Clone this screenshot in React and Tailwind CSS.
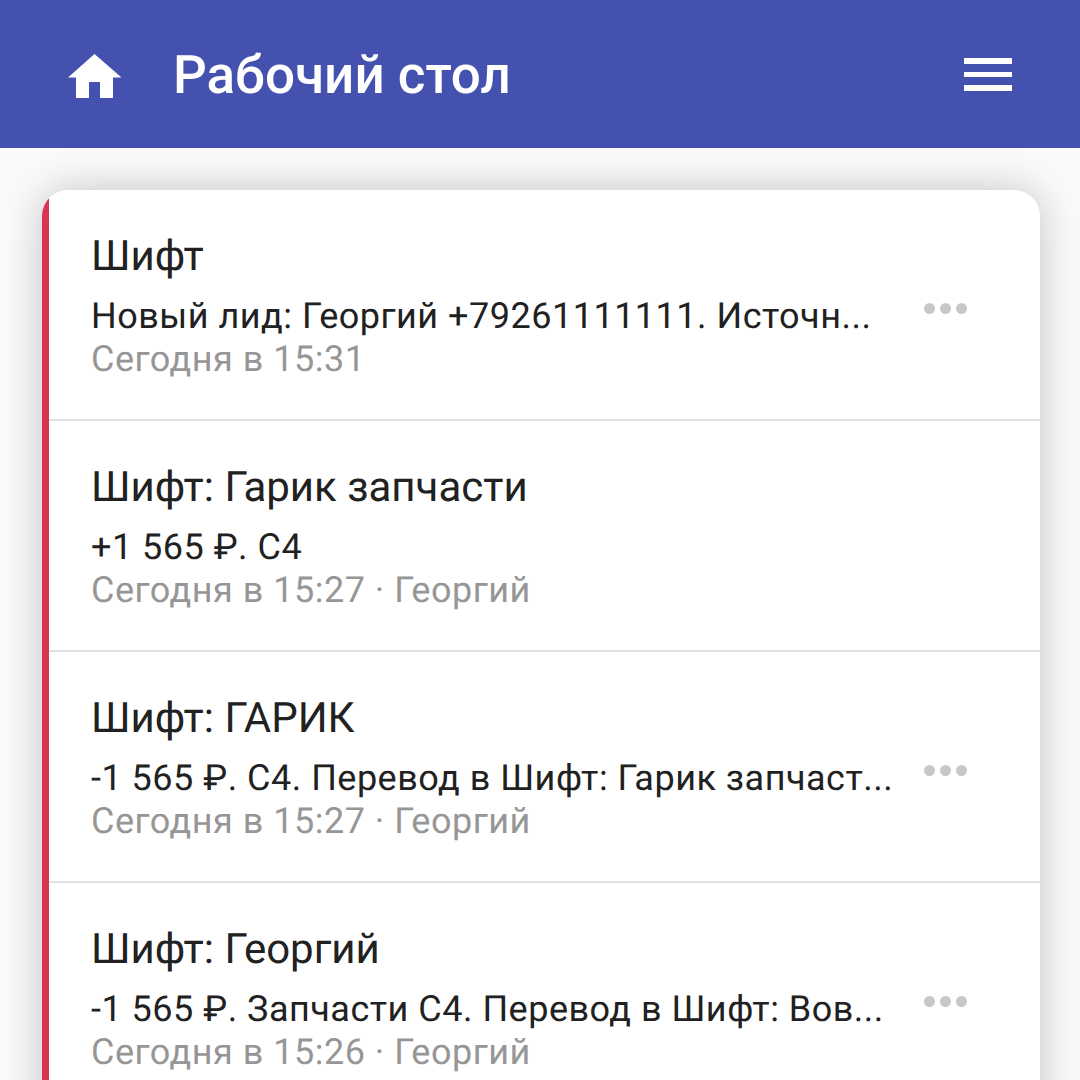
const rows = [
  { title: "Шифт", text: "Новый лид: Георгий +79261111111. Источн...", time: "Сегодня в 15:31", dots: true },
  { title: "Шифт: Гарик запчасти", text: "+1 565 ₽. С4", time: "Сегодня в 15:27 · Георгий", dots: false },
  { title: "Шифт: ГАРИК", text: "-1 565 ₽. С4. Перевод в Шифт: Гарик запчаст...", time: "Сегодня в 15:27 · Георгий", dots: true },
  { title: "Шифт: Георгий", text: "-1 565 ₽. Запчасти С4. Перевод в Шифт: Вов...", time: "Сегодня в 15:26 · Георгий", dots: true },
];

function Row({ r, last }) {
  return (
    <div className={`relative h-[231px] pl-[42px] pt-[41px] ${last ? "" : "border-b-2 border-[#e0e0e0]"}`}>
      <div className="text-[42px] leading-[52px] text-[#212121] whitespace-nowrap">{r.title}</div>
      <div className="mt-[11px] text-[36px] leading-[44px] text-[#212121] tracking-[0.5px] whitespace-nowrap">{r.text}</div>
      <div className="text-[36px] leading-[42px] text-[#969696] tracking-[0.5px] whitespace-nowrap">{r.time}</div>
      {r.dots && (
        <div className="absolute right-[73px] top-[113px] flex gap-[5px]">
          <span className="w-[11px] h-[11px] rounded-full bg-[#c8c8c8]" />
          <span className="w-[11px] h-[11px] rounded-full bg-[#c8c8c8]" />
          <span className="w-[11px] h-[11px] rounded-full bg-[#c8c8c8]" />
        </div>
      )}
    </div>
  );
}

export default function App() {
  return (
    <div className="w-[1080px] h-[1080px] overflow-hidden bg-[#fafafa] font-['Roboto',sans-serif] [text-rendering:geometricPrecision]">
      <header className="h-[148px] bg-[#4551af] flex items-center pl-[68px] pr-[68px] text-white">
        <svg width="54" height="44" viewBox="0 0 54 44" className="shrink-0 mt-[4px]" fill="white">
          <path d="M26.5 0 L53.5 23.5 H45 V44 H32 V28 H21 V44 H8 V23.5 H0 Z" />
        </svg>
        <h1 className="ml-[51px] mt-[2px] text-[53px] font-medium leading-none whitespace-nowrap">Рабочий стол</h1>
        <div className="ml-auto mt-[1px] flex flex-col gap-[8px]">
          <span className="block w-[48px] h-[5.4px] bg-white" />
          <span className="block w-[48px] h-[5.4px] bg-white" />
          <span className="block w-[48px] h-[5.4px] bg-white" />
        </div>
      </header>
      <main className="pt-[42px] pl-[42px] pr-[40px]">
        <div className="rounded-t-[26px] bg-white shadow-[0_0_40px_rgba(0,0,0,0.22)] h-[1000px] overflow-hidden">
          <div className="h-full border-l-[7px] border-[#d93450]">
            {rows.map((r, i) => <Row key={i} r={r} last={i === rows.length - 1} />)}
          </div>
        </div>
      </main>
    </div>
  );
}
